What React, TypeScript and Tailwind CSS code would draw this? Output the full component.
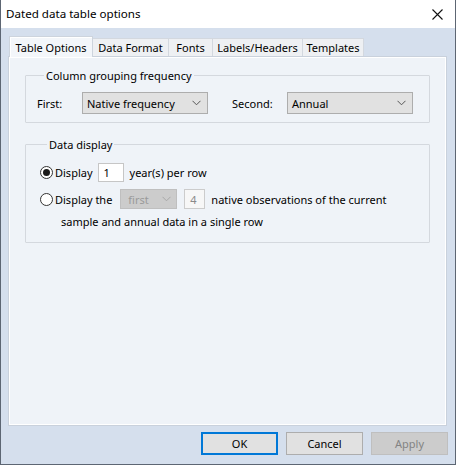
import React from 'react';

const tabs = [
  { label: 'Table Options', w: 'w-[84px]', active: true },
  { label: 'Data Format', w: 'w-[76px]' },
  { label: 'Fonts', w: 'w-[44px]' },
  { label: 'Labels/Headers', w: 'w-[90px]' },
  { label: 'Templates', w: 'w-[61px]' },
];

function Chevron({ color = '#555' }: { color?: string }) {
  return (
    <svg width="9" height="6" viewBox="0 0 9 6" fill="none">
      <path d="M0.5 0.8 L4.5 4.8 L8.5 0.8" stroke={color} strokeWidth="1" />
    </svg>
  );
}

function Select({ value, w }: { value: string; w: string }) {
  return (
    <div className={`${w} h-[22px] flex items-center justify-between border border-[#adadad] bg-[#e1e1e1] pl-[4px] pr-[6px]`}>
      <span>{value}</span>
      <Chevron />
    </div>
  );
}

function Radio({ checked }: { checked?: boolean }) {
  return (
    <span className="w-[13px] h-[13px] rounded-full border border-[#333] bg-white flex items-center justify-center shrink-0">
      {checked && <span className="w-[7px] h-[7px] rounded-full bg-[#1a1a1a]" />}
    </span>
  );
}

function Button({ label, focused, disabled }: { label: string; focused?: boolean; disabled?: boolean }) {
  const border = focused ? 'border-2 border-[#0078d7]' : disabled ? 'border border-[#bfbfbf]' : 'border border-[#adadad]';
  const bg = disabled ? 'bg-[#cccccc] text-[#838383]' : 'bg-[#e1e1e1] text-black';
  return (
    <div className={`w-[77px] h-[23px] flex items-center justify-center ${border} ${bg}`}>{label}</div>
  );
}

export default function App() {
  return (
    <div
      className="w-[456px] h-[465px] flex flex-col bg-[#d5dfed] border-x border-b border-[#5d6673] text-[11px] leading-[15px] text-black"
      style={{ fontFamily: '"Noto Sans", "Open Sans", sans-serif' }}
    >
      <div className="h-[28px] bg-white flex items-center justify-between pl-[5px] pr-[12px] shrink-0">
        <span className="text-[11.6px] -mt-px">Dated data table options</span>
        <svg width="11" height="11" viewBox="0 0 11 11">
          <path d="M0.5 0.5 L10.5 10.5 M10.5 0.5 L0.5 10.5" stroke="#111" strokeWidth="1.1" />
        </svg>
      </div>

      <div className="flex items-end pl-[8px] mt-[8px] h-[20px] relative z-10">
        {tabs.map((t) =>
          t.active ? (
            <div
              key={t.label}
              className={`${t.w} h-[21px] -mb-px flex items-center justify-center bg-[#f3f6fa] border border-b-0 border-[#cdd4dd] shadow-[inset_1px_1px_0_#fff]`}
            >
              {t.label}
            </div>
          ) : (
            <div
              key={t.label}
              className={`${t.w} h-[18px] flex items-center justify-center bg-[#eef0f3] border border-b-0 border-l-0 border-[#d3d8df]`}
            >
              {t.label}
            </div>
          )
        )}
      </div>

      <div className="ml-[7px] w-[439px] h-[370px] bg-[#eff3f8] border border-[#c9d1dc] shadow-[inset_1px_1px_0_#fff,inset_-1px_-1px_0_#fff] flex flex-col">
        <fieldset className="ml-[16px] mt-[11px] w-[405px] border border-[#d4d8de] rounded-[1px] px-[11px] pt-[9px] pb-[8px]">
          <legend className="ml-[7px] px-[2px]">Column grouping frequency</legend>
          <div className="flex items-center">
            <span className="w-[45px]">First:</span>
            <Select value="Native frequency" w="w-[126px]" />
            <span className="ml-[24px] w-[55px]">Second:</span>
            <Select value="Annual" w="w-[126px]" />
          </div>
        </fieldset>

        <fieldset className="ml-[16px] mt-[14px] w-[405px] h-[106px] border border-[#d4d8de] rounded-[1px] pl-[14px] pt-[11px]">
          <legend className="ml-[7px] px-[2px]">Data display</legend>
          <div className="flex items-center h-[19px]">
            <Radio checked />
            <span className="ml-[2px]">Display</span>
            <div className="ml-[5px] w-[26px] h-[19px] bg-white border border-[#c6c6c6] pl-[5px] flex items-center">1</div>
            <span className="ml-[6px]">year(s) per row</span>
          </div>
          <div className="flex items-center h-[20px] mt-[7px]">
            <Radio />
            <span className="ml-[2px]">Display the</span>
            <div className="ml-[8px] w-[57px] h-[20px] flex items-center justify-between bg-[#cccccc] border border-[#bfbfbf] pl-[7px] pr-[5px] text-[#9a9a9a]">
              <span>first</span>
              <Chevron color="#a8a8a8" />
            </div>
            <div className="ml-[7px] w-[21px] h-[20px] bg-[#f7f7f7] border border-[#cccccc] pl-[5px] flex items-center text-[#8a8a8a]">4</div>
            <span className="ml-[6px]">native observations of the current</span>
          </div>
          <div className="ml-[21px] mt-[5px]">sample and annual data in a single row</div>
        </fieldset>
      </div>

      <div className="flex justify-end gap-[8px] pr-[7px] mt-[6px]">
        <Button label="OK" focused />
        <Button label="Cancel" />
        <Button label="Apply" disabled />
      </div>
    </div>
  );
}
